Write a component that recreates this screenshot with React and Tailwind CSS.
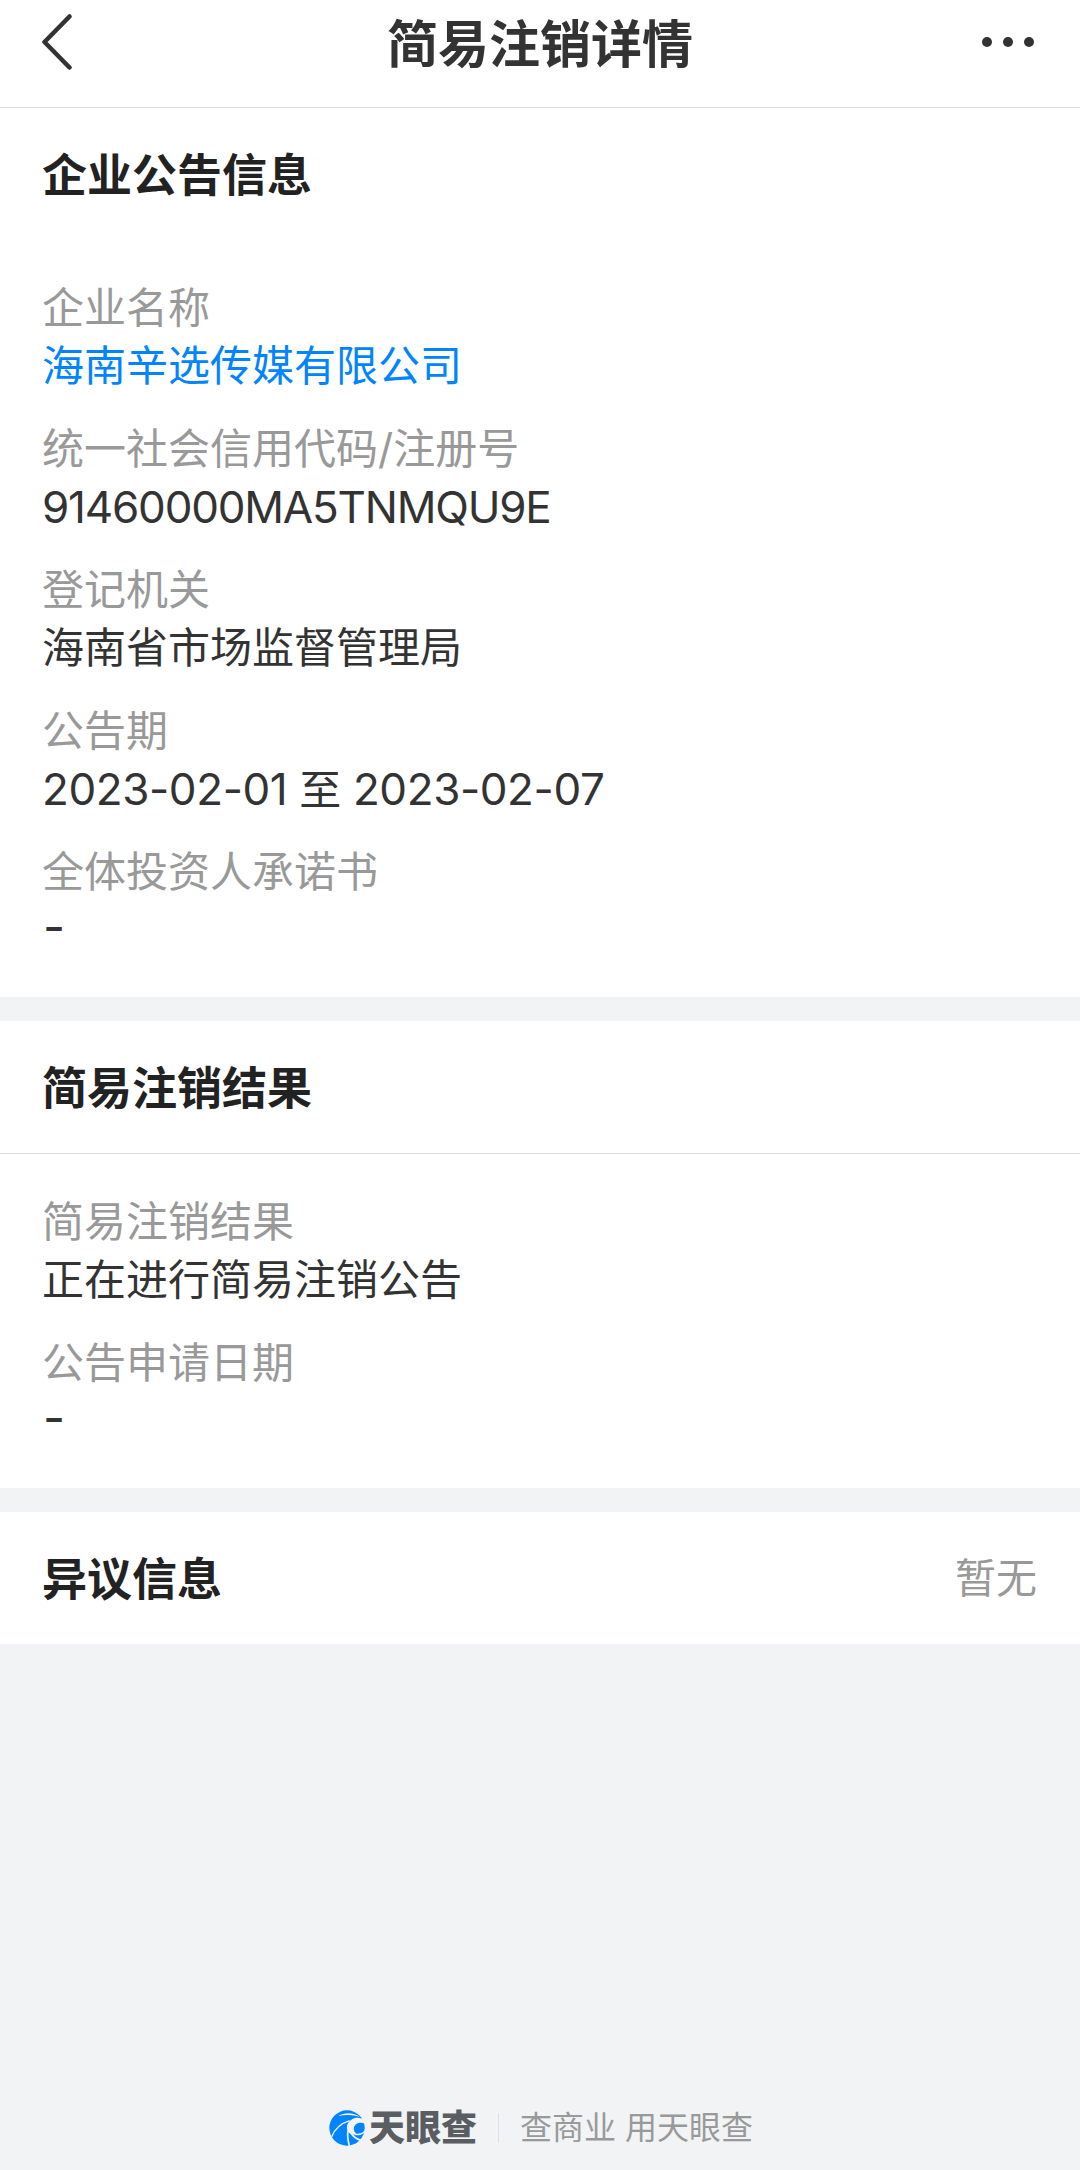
import React from 'react'

const noticeFields = [
  { label: '企业名称', value: '海南辛选传媒有限公司', link: true },
  { label: '统一社会信用代码/注册号', value: '91460000MA5TNMQU9E', code: true },
  { label: '登记机关', value: '海南省市场监督管理局' },
  { label: '公告期', period: ['2023-02-01', '2023-02-07'] },
  { label: '全体投资人承诺书', value: '-' },
]

const resultFields = [
  { label: '简易注销结果', value: '正在进行简易注销公告' },
  { label: '公告申请日期', value: '-' },
]

function FieldValue({ field }) {
  if (field.period) {
    return (
      <dd className="h-[58px] text-[44px] tracking-[-0.4px] text-[#333333]">
        {field.period[0]} <span className="text-[42px]">至</span> {field.period[1]}
      </dd>
    )
  }
  if (field.code) {
    return (
      <dd className="h-[58px] text-[44px] tracking-[-1.2px] text-[#333333]">
        {field.value}
      </dd>
    )
  }
  if (field.value === '-') {
    return (
      <dd className="h-[58px] pl-px text-[48px] leading-[56px] text-[#333333] [font-feature-settings:'case']">
        -
      </dd>
    )
  }
  return (
    <dd className={field.link ? 'h-[58px] text-[#0084ff]' : 'h-[58px] text-[#333333]'}>
      {field.value}
    </dd>
  )
}

function Field({ field }) {
  return (
    <div className="text-[42px] leading-[58px] whitespace-nowrap">
      <dt className="h-[58px] text-[#999999]">{field.label}</dt>
      <FieldValue field={field} />
    </div>
  )
}

function SectionTitle({ children }) {
  return <h2 className="text-[45px] font-bold text-[#222222]">{children}</h2>
}

function Logo() {
  return (
    <svg className="w-9 h-9" viewBox="13 12 106 108" fill="none">
      <circle cx="66" cy="66" r="53" fill="#0084ff" />
      {/* hollow of the wave */}
      <path
        d="M124 48C114 34 94 32 79 41C62 52 62 72 74 82C80 87 90 86 94 82C84 76 84 60 94 54C102 50 114 48 124 56Z"
        fill="#f1f3f5"
      />
      {/* crest and spray */}
      <path d="M40 30C60 18 86 19 106 34C86 25 62 25 40 30Z" fill="#f1f3f5" />
      <path d="M74 44C48 52 30 68 20 92" stroke="#f1f3f5" strokeWidth="4" />
      <path d="M70 70C66 86 68 102 73 120" stroke="#f1f3f5" strokeWidth="5" />
      <path d="M76 78C84 92 94 100 110 103" stroke="#f1f3f5" strokeWidth="5" />
      <path d="M88 84C100 88 112 84 122 74" stroke="#f1f3f5" strokeWidth="4" />
    </svg>
  )
}

export default function App() {
  return (
    <div className="w-[1080px] h-[2170px] flex flex-col bg-[#f1f3f5] font-['Inter','Noto_Sans_CJK_SC',sans-serif]">
      {/* Header */}
      <header className="h-[108px] shrink-0 flex items-center justify-between pl-[41px] pr-[45px] pb-[21px] bg-white border-b border-[#dedede] text-[#333333]">
        <svg className="w-[58px] h-[58px]" viewBox="0 0 58 58" fill="none">
          <path
            d="M28.5 2.5L3.5 28L28.5 53.5"
            stroke="currentColor"
            strokeWidth="4.5"
            strokeLinecap="round"
            strokeLinejoin="round"
          />
        </svg>
        <h1 className="pt-1 text-[51px] leading-[60px] font-bold">简易注销详情</h1>
        <svg className="w-[54px] h-3" viewBox="0 0 54 12" fill="currentColor">
          <circle cx="6" cy="5" r="5" />
          <circle cx="27" cy="5" r="5" />
          <circle cx="48" cy="5" r="5" />
        </svg>
      </header>

      {/* Company notice */}
      <section className="bg-white">
        <div className="h-[132px] pt-[3px] px-[42px] flex items-center">
          <SectionTitle>企业公告信息</SectionTitle>
        </div>
        <dl className="px-[42px] pt-[39px] pb-[38px] flex flex-col gap-[25px]">
          {noticeFields.map((field) => (
            <Field key={field.label} field={field} />
          ))}
        </dl>
      </section>

      {/* Deregistration result */}
      <section className="mt-6 bg-white">
        <div className="h-[133px] pt-[3px] px-[42px] flex items-center border-b border-[#dedede]">
          <SectionTitle>简易注销结果</SectionTitle>
        </div>
        <dl className="px-[42px] pt-[39px] pb-[38px] flex flex-col gap-[25px]">
          {resultFields.map((field) => (
            <Field key={field.label} field={field} />
          ))}
        </dl>
      </section>

      {/* Objections */}
      <section className="mt-6 h-[132px] pt-[3px] pl-[42px] pr-[43px] flex items-center justify-between bg-white">
        <SectionTitle>异议信息</SectionTitle>
        <span className="pb-0.5 text-[41px] text-[#999999]">暂无</span>
      </section>

      {/* Footer brand */}
      <footer className="mt-auto h-[64px] pb-[20px] pl-[329px] flex items-center whitespace-nowrap">
        <Logo />
        <span className="ml-1 text-[36px] leading-10 font-black text-[#5a5d62]">天眼查</span>
        <span className="ml-[21px] w-px h-[30px] bg-[#dddfe2]" />
        <span className="ml-[21px] text-[32px] leading-10 text-[#999999]">查商业 用天眼查</span>
      </footer>
    </div>
  )
}
